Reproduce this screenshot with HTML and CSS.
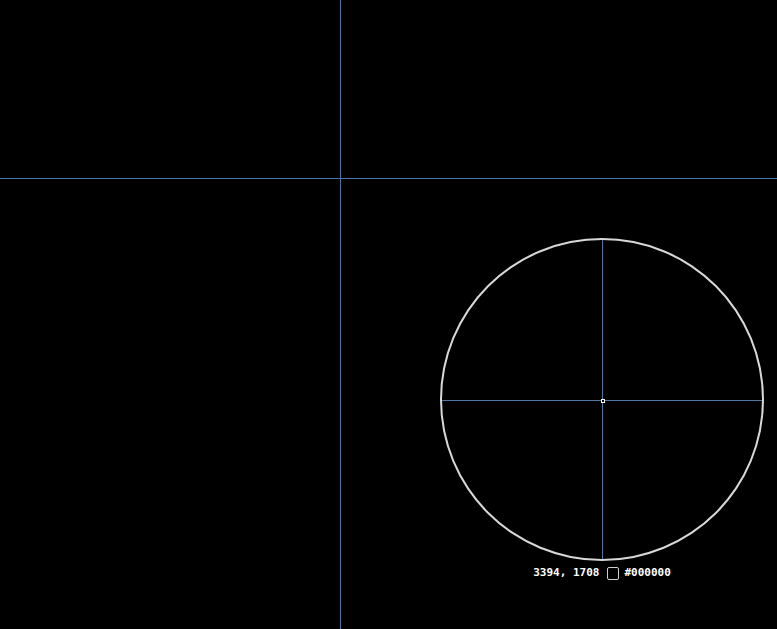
FILE: index.html
```html
<!DOCTYPE html>
<html lang="en">
<head>
    <meta charset="UTF-8">
    <meta name="viewport" content="width=device-width, initial-scale=1.0">
    <title>Color Picker</title>
    <link rel="stylesheet" href="styles.css">
</head>
<body>
    <div class="screen">
        <!-- guide lines through the anchor point -->
        <div class="guide guide-v"></div>
        <div class="guide guide-h"></div>

        <div class="picker">
            <div class="lens">
                <div class="lens-line lens-v"></div>
                <div class="lens-line lens-h"></div>
                <div class="pixel"></div>
            </div>
            <div class="info">
                <span class="coords">3394, 1708</span>
                <span class="swatch"></span>
                <span class="hex">#000000</span>
            </div>
        </div>
    </div>
</body>
</html>
```

FILE: styles.css
```css
html, body {
    margin: 0;
    height: 100%;
    background-color: #000;
    overflow: hidden;
}
.screen {
    position: relative;
    width: 100%;
    height: 100%;
}
.guide {
    position: absolute;
    background-color: #4d77a3;
}
.guide-v {
    left: 340px;
    top: 0;
    bottom: 0;
    width: 1px;
}
.guide-h {
    top: 178px;
    left: 0;
    right: 0;
    height: 1px;
}
.picker {
    position: absolute;
    left: 440px;
    top: 238px;
    width: 324px;
    display: flex;
    flex-direction: column;
    align-items: center;
}
.lens {
    position: relative;
    width: 320px;
    height: 319px;
    border: 2px solid #d8d8d8;
    border-radius: 50%;
    background-color: #000;
    overflow: hidden;
}
.lens-line {
    position: absolute;
    background-color: #4d77a3;
}
.lens-v {
    left: 160px;
    top: 0;
    bottom: 0;
    width: 1px;
}
.lens-h {
    top: 160px;
    left: 0;
    right: 0;
    height: 1px;
}
.pixel {
    position: absolute;
    left: 159px;
    top: 159px;
    width: 2px;
    height: 2px;
    border: 1px solid #fff;
    background-color: #000;
}
.info {
    margin-top: 5px;
    display: flex;
    align-items: center;
    font-family: "DejaVu Sans Mono", "Liberation Mono", monospace;
    font-size: 11px;
    font-weight: bold;
    color: #fff;
    line-height: 14px;
}
.swatch {
    width: 10px;
    height: 11px;
    margin: 0 5px 0 8px;
    border: 1px solid #cfcfcf;
    border-radius: 2px;
    background-color: #000;
}
```
